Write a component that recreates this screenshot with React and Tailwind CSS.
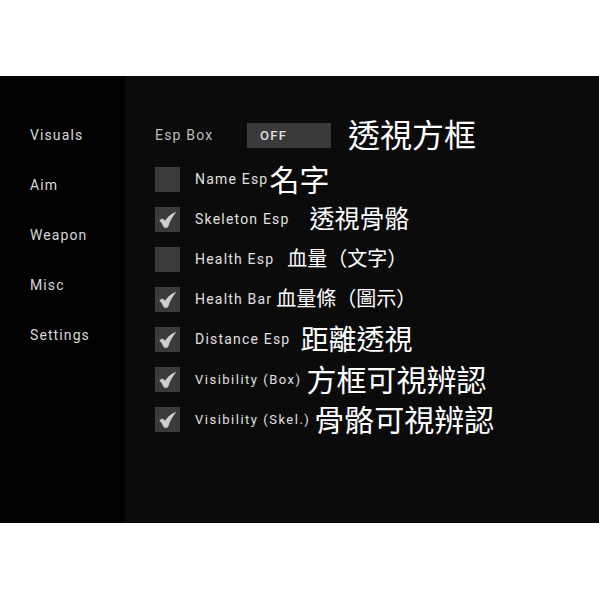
import React from "react";

const latin = { fontFamily: "Roboto, 'Liberation Sans', sans-serif" };
const cjk = { fontFamily: "'Noto Sans CJK TC', 'Noto Sans CJK SC', sans-serif" };

const tabs = ["Visuals", "Aim", "Weapon", "Misc", "Settings"];

const options = [
  { label: "Name Esp", zh: "名字", checked: false, size: "text-[30px]", gap: "ml-[1px]" },
  { label: "Skeleton Esp", zh: "透視骨骼", checked: true, size: "text-[25px]", gap: "ml-[20px]" },
  { label: "Health Esp", zh: "血量（文字）", checked: false, size: "text-[20px]", gap: "ml-[13px]" },
  { label: "Health Bar", zh: "血量條（圖示）", checked: true, size: "text-[20px]", gap: "ml-[4px]" },
  { label: "Distance Esp", zh: "距離透視", checked: true, size: "text-[28px]", gap: "ml-[10px]" },
  { label: "Visibility (Box)", zh: "方框可視辨認", checked: true, size: "text-[30px]", gap: "ml-[5px]", small: true },
  { label: "Visibility (Skel.)", zh: "骨骼可視辨認", checked: true, size: "text-[30px]", gap: "ml-[4px]", small: true },
];

// Heavy tapered tick, like the ✔ glyph
function Check() {
  return (
    <svg width="17" height="16" viewBox="0 0 17 16" fill="none">
      <path
        d="M0.8 8.4 C2.8 6.4 4.6 7 6.2 9.2 C8.6 5.2 11.8 2.2 16.6 0.4 C13.6 3.8 10.8 8.4 8.6 15.2 L5.2 15.2 C4.2 12.6 2.6 10.2 0.8 8.4 Z"
        fill="#cfcfcf"
        stroke="#cfcfcf"
        strokeWidth="0.8"
        strokeLinejoin="round"
      />
    </svg>
  );
}

function Checkbox({ checked }) {
  return (
    <div className="flex h-[25px] w-[25px] shrink-0 items-center justify-center bg-[#3b3b3b]">
      {checked && <Check />}
    </div>
  );
}

export default function App() {
  return (
    <div className="min-h-screen bg-white pt-[76px]">
      <div className="flex h-[447px] bg-[#0b0b0b]">
        <aside className="w-[125px] shrink-0 bg-[#020202] pt-[34px]" style={latin}>
          {tabs.map((t) => (
            <div
              key={t}
              className="flex h-[50px] items-center pl-[30px] text-[14px] tracking-[1.1px] text-[#d8d8d8]"
            >
              {t}
            </div>
          ))}
        </aside>

        <main className="flex-1 pl-[30px] pt-[47px]" style={latin}>
          <div className="flex h-[25px] items-center">
            <span className="w-[92px] text-[14px] tracking-[1.2px] text-[#bdbdbd]">Esp Box</span>
            <div className="flex h-[25px] w-[84px] items-center bg-[#3a3a3a] pl-[13px] text-[13px] font-medium tracking-[1.3px] text-[#e0e0e0]">
              OFF
            </div>
            <span className="ml-[17px] -mt-[6px] whitespace-nowrap text-[32px] leading-none text-white" style={cjk}>
              透視方框
            </span>
          </div>

          <div className="mt-[19px] flex flex-col gap-[15px]">
            {options.map((o) => (
              <div key={o.label} className="flex h-[25px] items-center">
                <Checkbox checked={o.checked} />
                <span
                  className={`ml-[15px] whitespace-nowrap text-[#e0e0e0] ${
                    o.small ? "text-[13px] tracking-[1.5px]" : "text-[14px] tracking-[1.2px]"
                  }`}
                >
                  {o.label}
                </span>
                <span
                  className={`${o.gap} ${o.size} -mt-[4px] whitespace-nowrap leading-none text-white`}
                  style={cjk}
                >
                  {o.zh}
                </span>
              </div>
            ))}
          </div>
        </main>
      </div>
    </div>
  );
}
